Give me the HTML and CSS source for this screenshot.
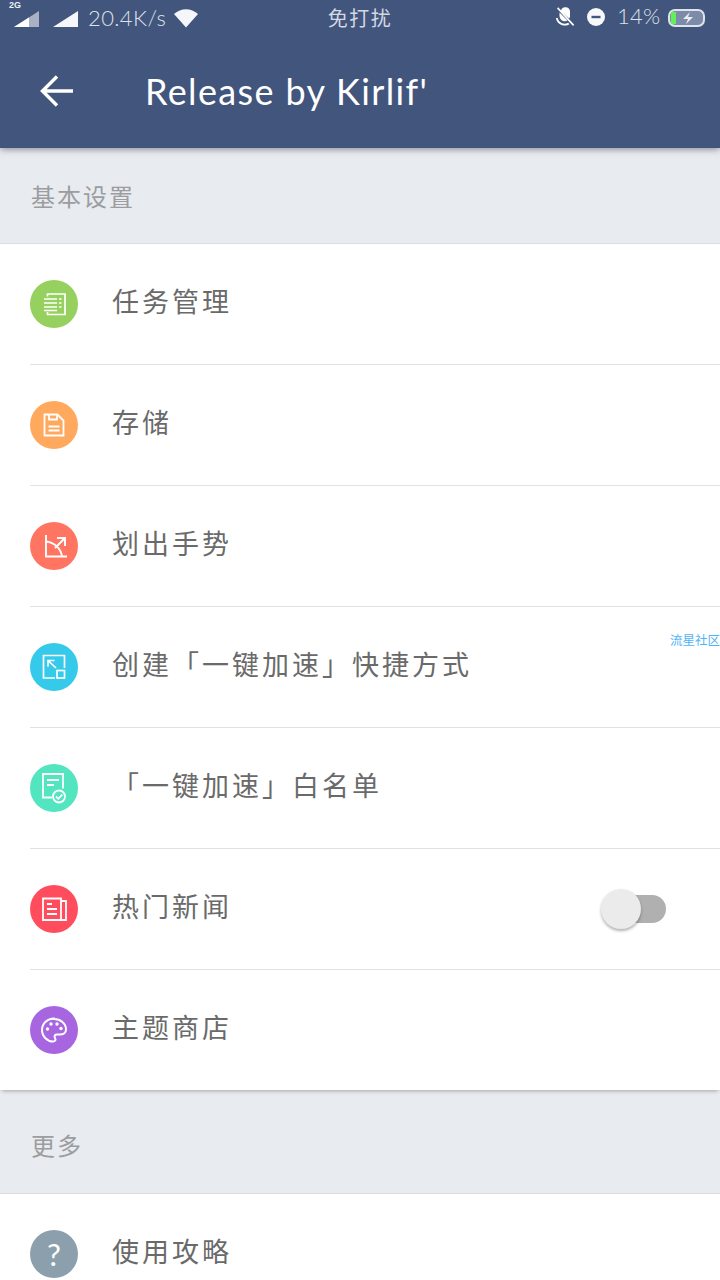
FILE: index.html
```html
<!DOCTYPE html>
<html lang="zh-CN">
<head>
  <meta charset="UTF-8" />
  <title>Release by Kirlif'</title>
  <link rel="stylesheet" href="styles.css">
</head>
<body>
  <header class="topbar">
    <div class="status">
      <div class="status-left">
        <span class="net">2G</span>
        <svg class="signal" width="28" height="18" viewBox="0 0 28 18"><path d="M1 17 26 1v16z" fill="#fff" opacity=".55"/><path d="M1 17 16 7.400v9.600z" fill="#fff"/></svg>
        <svg class="signal second" width="28" height="18" viewBox="0 0 28 18"><path d="M1 17 26 1v16z" fill="#f4f6f9"/></svg>
        <span class="speed">20.4K/s</span>
        <svg class="wifi" width="26" height="20" viewBox="0 0 26 20"><path d="M1 6C8-.5 18-.5 25 6L13 19.500z" fill="#f4f6f9"/></svg>
      </div>
      <div class="status-mid">免打扰</div>
      <div class="status-right">
        <svg width="20" height="20" viewBox="0 0 20 20"><path d="M6 3.500a4.600 4.600 0 0 1 9 1.500v5l-1 1.500zM4.500 5.500l8 8c-1 .8-3 1-4.500.4-1.800-.7-3.500-3-3.500-5zM1 11c.3 3.500 3 6 5.500 7 3 .9 6 .6 8-.8l-1.400-1.400c-2 1-4 1.100-6 .4C5 15.300 3 13.500 2.800 11zM2 1.500l1.200-1.200 16 17.500-1.200 1.200z" fill="#fff"/></svg>
        <svg width="18" height="18" viewBox="0 0 18 18"><circle cx="9" cy="9" r="9" fill="#f7f8fa"/><rect x="4.500" y="7.800" width="9" height="2.400" fill="#42557d"/></svg>
        <span class="percent">14%</span>
        <svg class="battery" width="38" height="18" viewBox="0 0 38 18"><rect x="1" y="1" width="35" height="16" rx="6" fill="#7d8ba8" stroke="#dfe3ea" stroke-width="2"/><rect x="3" y="3" width="5" height="12" fill="#62f05a"/><path d="M22 3 15 10h5l-2 5 7-7h-5z" fill="#e9ecf2"/></svg>
      </div>
    </div>
    <div class="appbar">
      <svg class="back" width="34" height="32" viewBox="0 0 34 32"><path d="M17 1.500 2.500 16 17 30.500M3 16h30" fill="none" stroke="#fff" stroke-width="3.400"/></svg>
      <h1>Release by Kirlif'</h1>
    </div>
  </header>

  <div class="section-title">基本设置</div>
  <ul class="list">
    <li class="row">
      <span class="icon green">
        <svg width="26" height="26" viewBox="0 0 26 26" fill="none" stroke="#fff" stroke-width="1.700"><path d="M6.500 5.500V3H24v20.500H6.500V21M3 8h13M3 12h13M3 16h13M3 19.500h13M18 8h2.500M18 12h2.500M18 16h2.500"/></svg>
      </span>
      <span class="label">任务管理</span>
    </li>
    <li class="row">
      <span class="icon orange">
        <svg width="26" height="26" viewBox="0 0 26 26" fill="none" stroke="#fff" stroke-width="1.800"><path d="M3.500 2.500h13l6 6v15h-19zM8 2.500v5h8v-5M7.500 14.500h11M7.500 18.500h11"/></svg>
      </span>
      <span class="label">存储</span>
    </li>
    <li class="row">
      <span class="icon red">
        <svg width="26" height="26" viewBox="0 0 26 26" fill="none" stroke="#fff" stroke-width="1.900"><path d="M5 2v21.500h21M5 8.500c8.500 1 15 7 16 15M14 15 24 5M16 5h8v8"/></svg>
      </span>
      <span class="label">划出手势</span>
    </li>
    <li class="row">
      <span class="icon blue">
        <svg width="26" height="26" viewBox="0 0 26 26" fill="none" stroke="#fff" stroke-width="1.700"><path d="M14 24H2.500V1.500h21V14M7 6.500 15 14M7 12.500v-6h6.500"/><rect x="16" y="16.500" width="7.500" height="7.500"/></svg>
      </span>
      <span class="label">创建「一键加速」快捷方式</span>
    </li>
    <li class="row">
      <span class="icon teal">
        <svg width="26" height="32" viewBox="0 0 26 32" fill="none" stroke="#fff" stroke-width="1.800"><path d="M11 25.500H2V2h20v14.500M6 8h12M6 13h7"/><circle cx="18" cy="24.500" r="6"/><path d="m15 24.500 2.300 2.300 4-4.200"/></svg>
      </span>
      <span class="label">「一键加速」白名单</span>
    </li>
    <li class="row">
      <span class="icon pink">
        <svg width="26" height="26" viewBox="0 0 26 26" fill="none" stroke="#fff" stroke-width="1.800"><path d="M2 2.500h18v21.500H2zM20 5h5v19h-5M6 8h5M6 13h10M6 18h10"/></svg>
      </span>
      <span class="label">热门新闻</span>
      <span class="switch"><span class="knob"></span></span>
    </li>
    <li class="row">
      <span class="icon purple">
        <svg width="28" height="28" viewBox="0 0 28 28"><path d="M14 2.500C7.500 2.500 2 7.500 2 14c0 6.500 5.500 11.500 11 11.500 2.500 0 3-2 2-3.500-1.200-2 0-3.500 2-3.500h3c3.500 0 6-2 6-5 0-6-5.500-10.500-12-10.500z" fill="none" stroke="#fff" stroke-width="2"/><circle cx="7.500" cy="13" r="1.700" fill="#fff"/><circle cx="11" cy="8" r="1.700" fill="#fff"/><circle cx="17" cy="8" r="1.700" fill="#fff"/><circle cx="21" cy="12.500" r="1.700" fill="#fff"/></svg>
      </span>
      <span class="label">主题商店</span>
    </li>
  </ul>

  <div class="section-title more">更多</div>
  <ul class="list">
    <li class="row">
      <span class="icon gray"><span class="qmark">?</span></span>
      <span class="label">使用攻略</span>
    </li>
  </ul>

  <span class="watermark">流星社区</span>
</body>
</html>
```

FILE: styles.css
```css
html, body { margin: 0; padding: 0; }
body { position: relative; width: 720px; height: 1280px; overflow: hidden; background: #e8ebf0; font-family: "Noto Sans CJK SC", "Noto Sans", sans-serif; }
ul { list-style: none; margin: 0; padding: 0; }

.topbar { position: relative; height: 148px; background: #42557d; box-shadow: 0 1px 7px rgba(40, 45, 60, .55); }
.status { display: flex; height: 34px; color: #dde1e9; }
.status-left { position: relative; display: flex; align-items: center; width: 300px; padding-left: 13px; box-sizing: border-box; }
.net { position: absolute; left: 9px; top: 0; font: bold 9px "Liberation Sans", sans-serif; color: #eef0f4; }
.signal { margin-top: 4px; }
.signal.second { margin-left: 11px; }
.speed { margin-left: 8px; font: 300 22px "Lato", sans-serif; letter-spacing: .4px; }
.wifi { margin-left: 7px; margin-top: 1px; }
.status-mid { width: 120px; text-align: center; color: #d3d8e2; font-size: 20px; letter-spacing: 1.500px; line-height: 36px; }
.status-right { display: flex; align-items: center; gap: 12px; padding-left: 135px; }
.percent { margin-top: -4px; font: 300 22px "Lato", sans-serif; letter-spacing: .2px; }
.battery { margin-left: -4px; margin-top: 1px; }
.appbar { display: flex; align-items: center; height: 114px; padding-left: 40px; }
.back { flex: none; margin-bottom: 1px; }
.appbar h1 { margin: 0 0 1px 71px; font: 400 36px "Lato", sans-serif; letter-spacing: 1.350px; color: #fff; white-space: nowrap; }

.section-title { box-sizing: border-box; height: 96px; padding: 30px 0 0 31px; font-size: 24px; line-height: 36px; letter-spacing: 2px; color: #9b9d9f; background: #e8ebf0; border-bottom: 1px solid #dcdcdc; }
.section-title.more { height: 104px; padding-top: 37px; }

.list { position: relative; background: #fff; box-shadow: 0 3px 4px -2px rgba(0, 0, 0, .3); }
.row { position: relative; display: flex; align-items: center; height: 120px; margin-left: 30px; border-bottom: 1px solid #e2e2e2; }
.row:last-child { border-bottom: 0; }
.icon { flex: none; display: flex; align-items: center; justify-content: center; width: 48px; height: 48px; border-radius: 50%; }
.green { background: #96d05f; }
.orange { background: #ffa95f; }
.red { background: #ff7561; }
.blue { background: #35c9ea; }
.teal { background: #52e5c0; }
.pink { background: #ff4d5e; }
.purple { background: #a765e0; }
.gray { background: #8c9fad; }
.qmark { font: 400 31px "Lato", sans-serif; color: #fff; }
.label { margin-left: 34px; padding-bottom: 7px; font-size: 27px; letter-spacing: 3px; color: #6a6a6a; white-space: nowrap; text-spacing-trim: space-all; }

.switch { position: absolute; left: 574px; top: 46px; width: 62px; height: 28px; border-radius: 14px; background: #b0b0b0; }
.knob { position: absolute; left: -3px; top: -6px; width: 40px; height: 40px; border-radius: 50%; background: #ebebeb; box-shadow: 0 2px 3px rgba(0, 0, 0, .3); }

.watermark { position: absolute; left: 670px; top: 632px; font-size: 12.500px; line-height: 16px; color: #4db4f8; white-space: nowrap; }
```
